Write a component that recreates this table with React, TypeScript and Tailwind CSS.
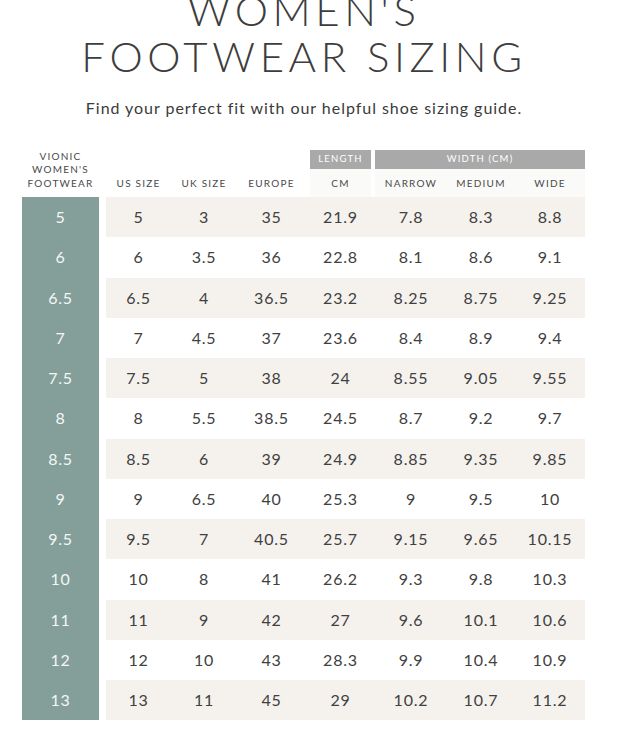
import React from "react";

const rows = [
  ["5", "5", "3", "35", "21.9", "7.8", "8.3", "8.8"],
  ["6", "6", "3.5", "36", "22.8", "8.1", "8.6", "9.1"],
  ["6.5", "6.5", "4", "36.5", "23.2", "8.25", "8.75", "9.25"],
  ["7", "7", "4.5", "37", "23.6", "8.4", "8.9", "9.4"],
  ["7.5", "7.5", "5", "38", "24", "8.55", "9.05", "9.55"],
  ["8", "8", "5.5", "38.5", "24.5", "8.7", "9.2", "9.7"],
  ["8.5", "8.5", "6", "39", "24.9", "8.85", "9.35", "9.85"],
  ["9", "9", "6.5", "40", "25.3", "9", "9.5", "10"],
  ["9.5", "9.5", "7", "40.5", "25.7", "9.15", "9.65", "10.15"],
  ["10", "10", "8", "41", "26.2", "9.3", "9.8", "10.3"],
  ["11", "11", "9", "42", "27", "9.6", "10.1", "10.6"],
  ["12", "12", "10", "43", "28.3", "9.9", "10.4", "10.9"],
  ["13", "13", "11", "45", "29", "10.2", "10.7", "11.2"],
];

const font = { fontFamily: "Lato, 'Open Sans', sans-serif" };

function SizeRow({ r, i }: { r: string[]; i: number }) {
  const shade = i % 2 === 0 ? "bg-[#f5f2ee]" : "bg-white";
  return (
    <div className="flex h-[40.25px]">
      <div className="w-[77px] bg-[#849f9a] text-[#f4f6f5] flex items-center justify-center text-[16px] tracking-[0.04em]">
        {r[0]}
      </div>
      <div className="w-[7px]" />
      <div className={`flex ${shade} text-[#404040] text-[16px] tracking-[0.05em]`}>
        <div className="w-[65px] flex items-center justify-center">{r[1]}</div>
        <div className="w-[66px] flex items-center justify-center">{r[2]}</div>
        <div className="w-[69px] flex items-center justify-center">{r[3]}</div>
        <div className="w-[4px]" />
        <div className="w-[61px] flex items-center justify-center">{r[4]}</div>
        <div className="w-[4px]" />
        <div className="w-[72px] flex items-center justify-center">{r[5]}</div>
        <div className="w-[68px] flex items-center justify-center">{r[6]}</div>
        <div className="w-[70px] flex items-center justify-center">{r[7]}</div>
      </div>
    </div>
  );
}

export default function App() {
  return (
    <div className="w-[632px] h-[742px] bg-white overflow-hidden" style={font}>
      <div className="w-[608px]">
        <h1 className="mt-[-13px] text-center text-[42px] leading-[46px] font-light tracking-[0.11em] text-[#3d3d3d]">
          WOMEN'S
          <br />
          FOOTWEAR SIZING
        </h1>
        <p className="mt-[19px] text-center text-[16px] leading-[20px] tracking-[0.06em] text-[#3a3a3a]">
          Find your perfect fit with our helpful shoe sizing guide.
        </p>

        <div className="ml-[22px] mt-[32px]">
          <div className="flex h-[47px] items-end text-[10px] tracking-[0.12em] text-[#4a4a4a]">
            <div className="w-[77px] pb-[7px] text-center leading-[13.5px]">
              VIONIC
              <br />
              WOMEN'S
              <br />
              FOOTWEAR
            </div>
            <div className="w-[7px]" />
            <div className="w-[65px] h-[28px] flex items-center justify-center">US SIZE</div>
            <div className="w-[66px] h-[28px] flex items-center justify-center">UK SIZE</div>
            <div className="w-[69px] h-[28px] flex items-center justify-center">EUROPE</div>
            <div className="w-[4px]" />
            <div className="w-[61px] flex flex-col">
              <div className="h-[19px] bg-[#a9a9a9] text-white flex items-center justify-center text-[9.5px]">
                LENGTH
              </div>
              <div className="h-[28px] bg-[#fafaf9] flex items-center justify-center">CM</div>
            </div>
            <div className="w-[4px]" />
            <div className="w-[210px] flex flex-col">
              <div className="h-[19px] bg-[#a9a9a9] text-white flex items-center justify-center text-[9.5px]">
                WIDTH (CM)
              </div>
              <div className="h-[28px] bg-[#fafaf9] flex">
                <div className="w-[72px] flex items-center justify-center">NARROW</div>
                <div className="w-[68px] flex items-center justify-center">MEDIUM</div>
                <div className="w-[70px] flex items-center justify-center">WIDE</div>
              </div>
            </div>
          </div>
          {rows.map((r, i) => (
            <SizeRow key={r[0]} r={r} i={i} />
          ))}
        </div>
      </div>
    </div>
  );
}
